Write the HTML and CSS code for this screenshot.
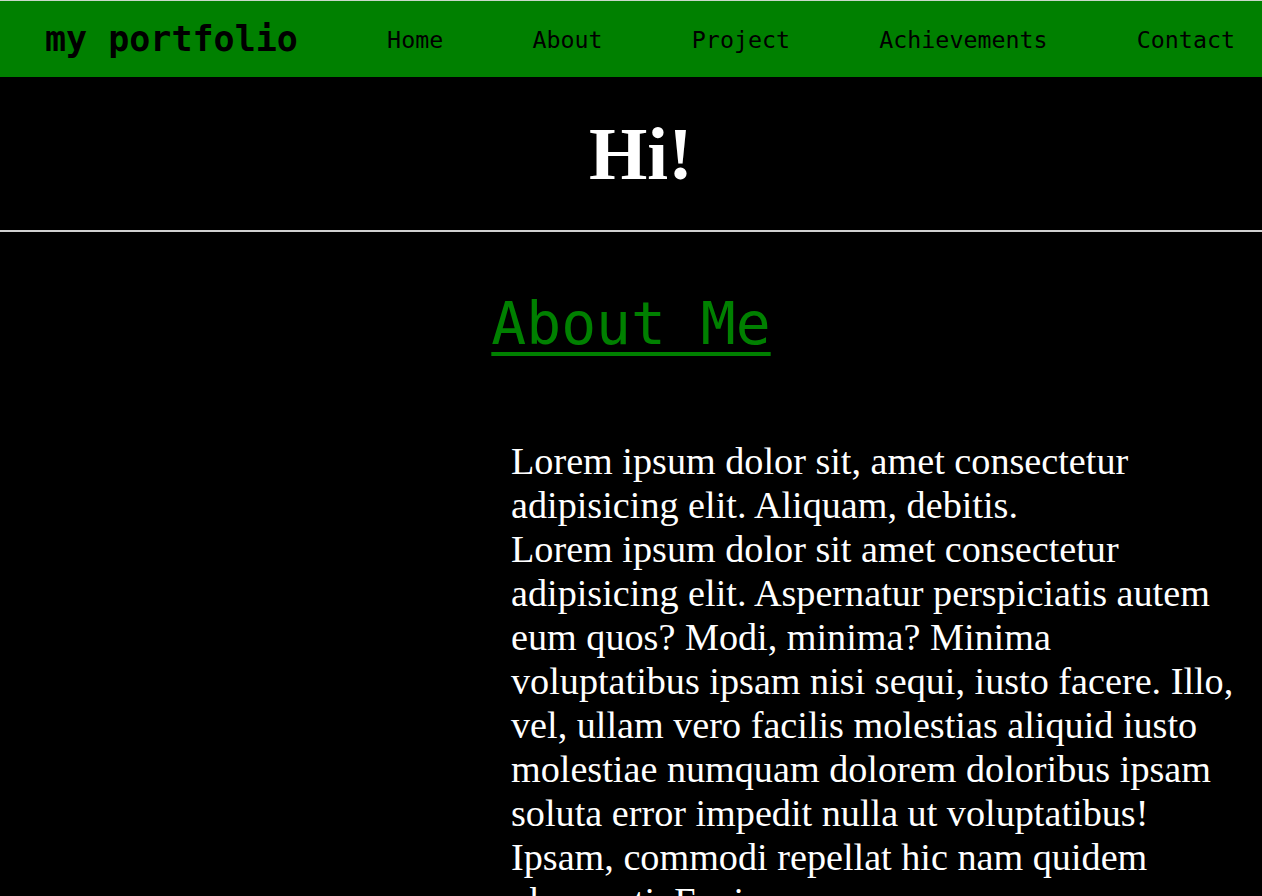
FILE: index.html
```html
<!DOCTYPE html>
<html lang="en">
<head>
<meta charset="utf-8">
<title>my portfolio</title>
<link rel="stylesheet" href="styles.css">
</head>
<body>
<nav class="navbar">
  <div class="logo">my portfolio</div>
  <a class="nav-link" href="#">Home</a>
  <a class="nav-link" href="#">About</a>
  <a class="nav-link" href="#">Project</a>
  <a class="nav-link" href="#">Achievements</a>
  <a class="nav-link" href="#">Contact</a>
</nav>
<header class="hero">
  <h1 class="hero-title">Hi!</h1>
</header>
<section class="about">
  <h2 class="about-title"><a href="#">About Me</a></h2>
  <div class="about-body">
    <div class="about-media"></div>
    <p class="about-text">Lorem ipsum dolor sit, amet consectetur adipisicing elit. Aliquam, debitis.<br>Lorem ipsum dolor sit amet consectetur adipisicing elit. Aspernatur perspiciatis autem eum quos? Modi, minima? Minima voluptatibus ipsam nisi sequi, iusto facere. Illo, vel, ullam vero facilis molestias aliquid iusto molestiae numquam dolorem doloribus ipsam soluta error impedit nulla ut voluptatibus! Ipsam, commodi repellat hic nam quidem obcaecati. Ea, ipsa.</p>
  </div>
</section>
</body>
</html>
```

FILE: styles.css
```css
html, body {
  margin: 0;
  padding: 0;
  background: #000;
}

.navbar {
  display: flex;
  align-items: center;
  justify-content: space-between;
  height: 76px;
  padding: 0 27px 0 45px;
  background: #008000;
  border-top: 1px solid #c8d8c8;
  font-family: "DejaVu Sans Mono", "Liberation Mono", monospace;
}

.logo {
  font-size: 35px;
  font-weight: bold;
  color: #000;
}

.nav-link {
  font-size: 23.3px;
  color: #000;
  text-decoration: none;
}

.hero {
  display: flex;
  justify-content: center;
  align-items: center;
  height: 153px;
  border-bottom: 2px solid #d0d0d0;
  padding-left: 20px;
}

.hero-title {
  margin: 0;
  font-family: "Liberation Serif", "Times New Roman", serif;
  font-size: 75px;
  font-weight: bold;
  color: #fff;
}

.about {
  padding-top: 58px;
}

.about-title {
  margin: 0;
  text-align: center;
  font-family: "DejaVu Sans Mono", "Liberation Mono", monospace;
  font-size: 58px;
  font-weight: normal;
}

.about-title a {
  color: #008000;
  text-decoration: underline;
  text-decoration-thickness: 4px;
  text-underline-offset: 8px;
}

.about-body {
  display: grid;
  grid-template-columns: 511px 1fr;
  padding-top: 81px;
}

.about-text {
  margin: 0;
  padding-right: 20px;
  font-family: "Liberation Serif", "Times New Roman", serif;
  font-size: 38.2px;
  line-height: 44px;
  color: #fff;
}
```
